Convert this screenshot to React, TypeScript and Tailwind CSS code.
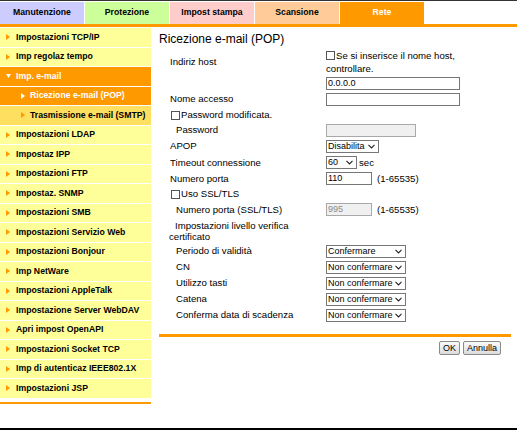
import { FC, ReactNode } from 'react';

const tabs = [
  { label: 'Manutenzione', bg: 'bg-[#ccccff]', text: 'text-black' },
  { label: 'Protezione', bg: 'bg-[#ccff99]', text: 'text-black' },
  { label: 'Impost stampa', bg: 'bg-[#ffcccc]', text: 'text-black' },
  { label: 'Scansione', bg: 'bg-[#ffcc99]', text: 'text-black' },
  { label: 'Rete', bg: 'bg-[#ff9900]', text: 'text-white' },
];

type NavItem = { label: string; kind?: 'open' | 'active' | 'sub' };

const navItems: NavItem[] = [
  { label: 'Impostazioni TCP/IP' },
  { label: 'Imp regolaz tempo' },
  { label: 'Imp. e-mail', kind: 'open' },
  { label: 'Ricezione e-mail (POP)', kind: 'active' },
  { label: 'Trasmissione e-mail (SMTP)', kind: 'sub' },
  { label: 'Impostazioni LDAP' },
  { label: 'Impostaz IPP' },
  { label: 'Impostazioni FTP' },
  { label: 'Impostaz. SNMP' },
  { label: 'Impostazioni SMB' },
  { label: 'Impostazioni Servizio Web' },
  { label: 'Impostazioni Bonjour' },
  { label: 'Imp NetWare' },
  { label: 'Impostazioni AppleTalk' },
  { label: 'Impostazione Server WebDAV' },
  { label: 'Apri impost OpenAPI' },
  { label: 'Impostazioni Socket TCP' },
  { label: 'Imp di autenticaz IEEE802.1X' },
  { label: 'Impostazioni JSP' },
];

const certRows = [
  { label: 'Periodo di validità', value: 'Confermare' },
  { label: 'CN', value: 'Non confermare' },
  { label: 'Utilizzo tasti', value: 'Non confermare' },
  { label: 'Catena', value: 'Non confermare' },
  { label: 'Conferma data di scadenza', value: 'Non confermare' },
];

const RightArrow: FC<{ color: string }> = ({ color }) => (
  <svg width="4" height="6" viewBox="0 0 4 6" className="shrink-0">
    <polygon points="0,0 4,3 0,6" fill={color} />
  </svg>
);

const DownArrow = () => (
  <svg width="5" height="4" viewBox="0 0 5 4" className="shrink-0">
    <polygon points="0,0 5,0 2.5,4" fill="#ffffff" />
  </svg>
);

const Checkbox = () => (
  <span className="inline-block w-[9px] h-[9px] shrink-0 border border-[#555] bg-white" />
);

const TextBox: FC<{ w: string; value?: string; disabled?: boolean }> = ({ w, value, disabled }) => (
  <div
    className={
      'h-[13px] border flex items-center pl-px text-[9px] leading-none ' +
      w +
      (disabled ? ' bg-[#f0f0f0] border-[#a9a9a9] text-[#8a8a8a]' : ' bg-white border-[#767676] text-black')
    }
  >
    {value}
  </div>
);

const Select: FC<{ w: string; value: string }> = ({ w, value }) => (
  <div
    className={
      'h-[13px] border border-[#767676] bg-white flex items-center justify-between pl-px pr-[3px] text-[9px] leading-none ' +
      w
    }
  >
    <span className="whitespace-nowrap">{value}</span>
    <svg width="7" height="5" viewBox="0 0 7 5" className="shrink-0 ml-px">
      <polyline points="0.5,0.8 3.5,4 6.5,0.8" fill="none" stroke="#222" strokeWidth="1.1" />
    </svg>
  </div>
);

const Row: FC<{ h: string; label?: ReactNode; children?: ReactNode }> = ({ h, label, children }) => (
  <div className={'flex items-center ' + h}>
    <div className="w-[157px] shrink-0 flex items-center">{label}</div>
    <div className="flex items-center gap-[5px]">{children}</div>
  </div>
);

const Sidebar = () => (
  <div className="w-[151px] shrink-0 flex flex-col">
    <div className="flex flex-col gap-px">
      {navItems.map((item) => {
        const isOrange = item.kind === 'open' || item.kind === 'active';
        const isSub = item.kind === 'active' || item.kind === 'sub';
        const bg = isOrange ? 'bg-[#ff9900]' : item.kind === 'sub' ? 'bg-[#ffdf5f]' : 'bg-[#ffff99]';
        return (
          <div
            key={item.label}
            className={
              'h-[18.5px] flex items-center font-bold text-[8.7px] whitespace-nowrap ' +
              bg +
              (isOrange ? ' text-white' : ' text-black') +
              (isSub ? ' pl-[21px]' : ' pl-[6px]')
            }
          >
            <span className={'flex items-center ' + (isSub ? 'w-[9px]' : 'w-[10px]')}>
              {item.kind === 'open' ? <DownArrow /> : <RightArrow color={isOrange ? '#ffffff' : '#ff9900'} />}
            </span>
            <span>{item.label}</span>
          </div>
        );
      })}
    </div>
    <div className="mt-[4px] h-[2.5px] bg-[#ff9900]" />
  </div>
);

const Content = () => (
  <div className="flex-1 flex flex-col pl-[8px] text-[9.6px] text-black">
    <div className="h-[21px] pt-[4px] text-[12px] leading-[14px]">Ricezione e-mail (POP)</div>
    <div className="pl-[10px]">
      <Row h="h-[26px]" label={<span className="pl-[1px]">Indiriz host</span>}>
        <div className="flex flex-col leading-[13px]">
          <div className="flex items-center gap-px">
            <Checkbox />
            <span>Se si inserisce il nome host,</span>
          </div>
          <span>controllare.</span>
        </div>
      </Row>
      <Row h="h-[16px]">
        <TextBox w="w-[134px]" value="0.0.0.0" />
      </Row>
      <Row h="h-[17px]" label={<span className="pl-[1px]">Nome accesso</span>}>
        <TextBox w="w-[134px]" />
      </Row>
      <Row
        h="h-[14px]"
        label={
          <span className="flex items-center gap-px pl-[2px] whitespace-nowrap">
            <Checkbox />
            Password modificata.
          </span>
        }
      />
      <Row h="h-[16px]" label={<span className="pl-[7px]">Password</span>}>
        <TextBox w="w-[90px]" disabled />
      </Row>
      <Row h="h-[17px]" label={<span className="pl-[1px]">APOP</span>}>
        <Select w="w-[53px]" value="Disabilita" />
      </Row>
      <Row h="h-[16px]" label={<span className="pl-[1px]">Timeout connessione</span>}>
        <div className="flex items-center gap-[2px]">
          <Select w="w-[31px]" value="60" />
          <span>sec</span>
        </div>
      </Row>
      <Row h="h-[16px]" label={<span className="pl-[1px]">Numero porta</span>}>
        <TextBox w="w-[46px]" value="110" />
        <span>(1-65535)</span>
      </Row>
      <Row
        h="h-[15px]"
        label={
          <span className="flex items-center gap-px pl-[2px] whitespace-nowrap">
            <Checkbox />
            Uso SSL/TLS
          </span>
        }
      />
      <Row h="h-[16px]" label={<span className="pl-[7px]">Numero porta (SSL/TLS)</span>}>
        <TextBox w="w-[46px]" value="995" disabled />
        <span>(1-65535)</span>
      </Row>
      <div className="h-[25px] flex flex-col justify-center leading-[11px]">
        <span className="pl-[6px]">Impostazioni livello verifica</span>
        <span>certificato</span>
      </div>
      {certRows.map((r) => (
        <Row key={r.label} h="h-[16px]" label={<span className="pl-[7px]">{r.label}</span>}>
          <Select w="w-[80px]" value={r.value} />
        </Row>
      ))}
    </div>
    <div className="mt-[11px] h-[3px] bg-[#ff9900] mr-[6px]" />
    <div className="flex justify-end gap-[3px] mt-[4px] pr-[16px]">
      <button className="h-[14px] px-[3px] border border-[#8a8a8a] rounded-[2px] bg-gradient-to-b from-[#fafafa] to-[#dcdcdc] text-[9px] leading-none">
        OK
      </button>
      <button className="h-[14px] px-[3px] border border-[#8a8a8a] rounded-[2px] bg-gradient-to-b from-[#fafafa] to-[#dcdcdc] text-[9px] leading-none">
        Annulla
      </button>
    </div>
  </div>
);

const App = () => {
  return (
    <div
      className="w-[517px] h-[430px] bg-white flex flex-col overflow-hidden"
      style={{ fontFamily: '"Liberation Sans", Arial, sans-serif' }}
    >
      <div className="h-px bg-[#333]" />
      <div className="h-px bg-white" />
      <div className="h-[22px] flex gap-px">
        {tabs.map((t) => (
          <div
            key={t.label}
            className={'w-[84px] flex items-center justify-center font-bold text-[8.7px] ' + t.bg + ' ' + t.text}
          >
            {t.label}
          </div>
        ))}
      </div>
      <div className="h-[3px] bg-[#ff9900]" />
      <div className="h-px bg-white" />
      <div className="flex-1 flex">
        <Sidebar />
        <Content />
      </div>
      <div className="h-[2px] bg-black" />
    </div>
  );
};

export default App;
